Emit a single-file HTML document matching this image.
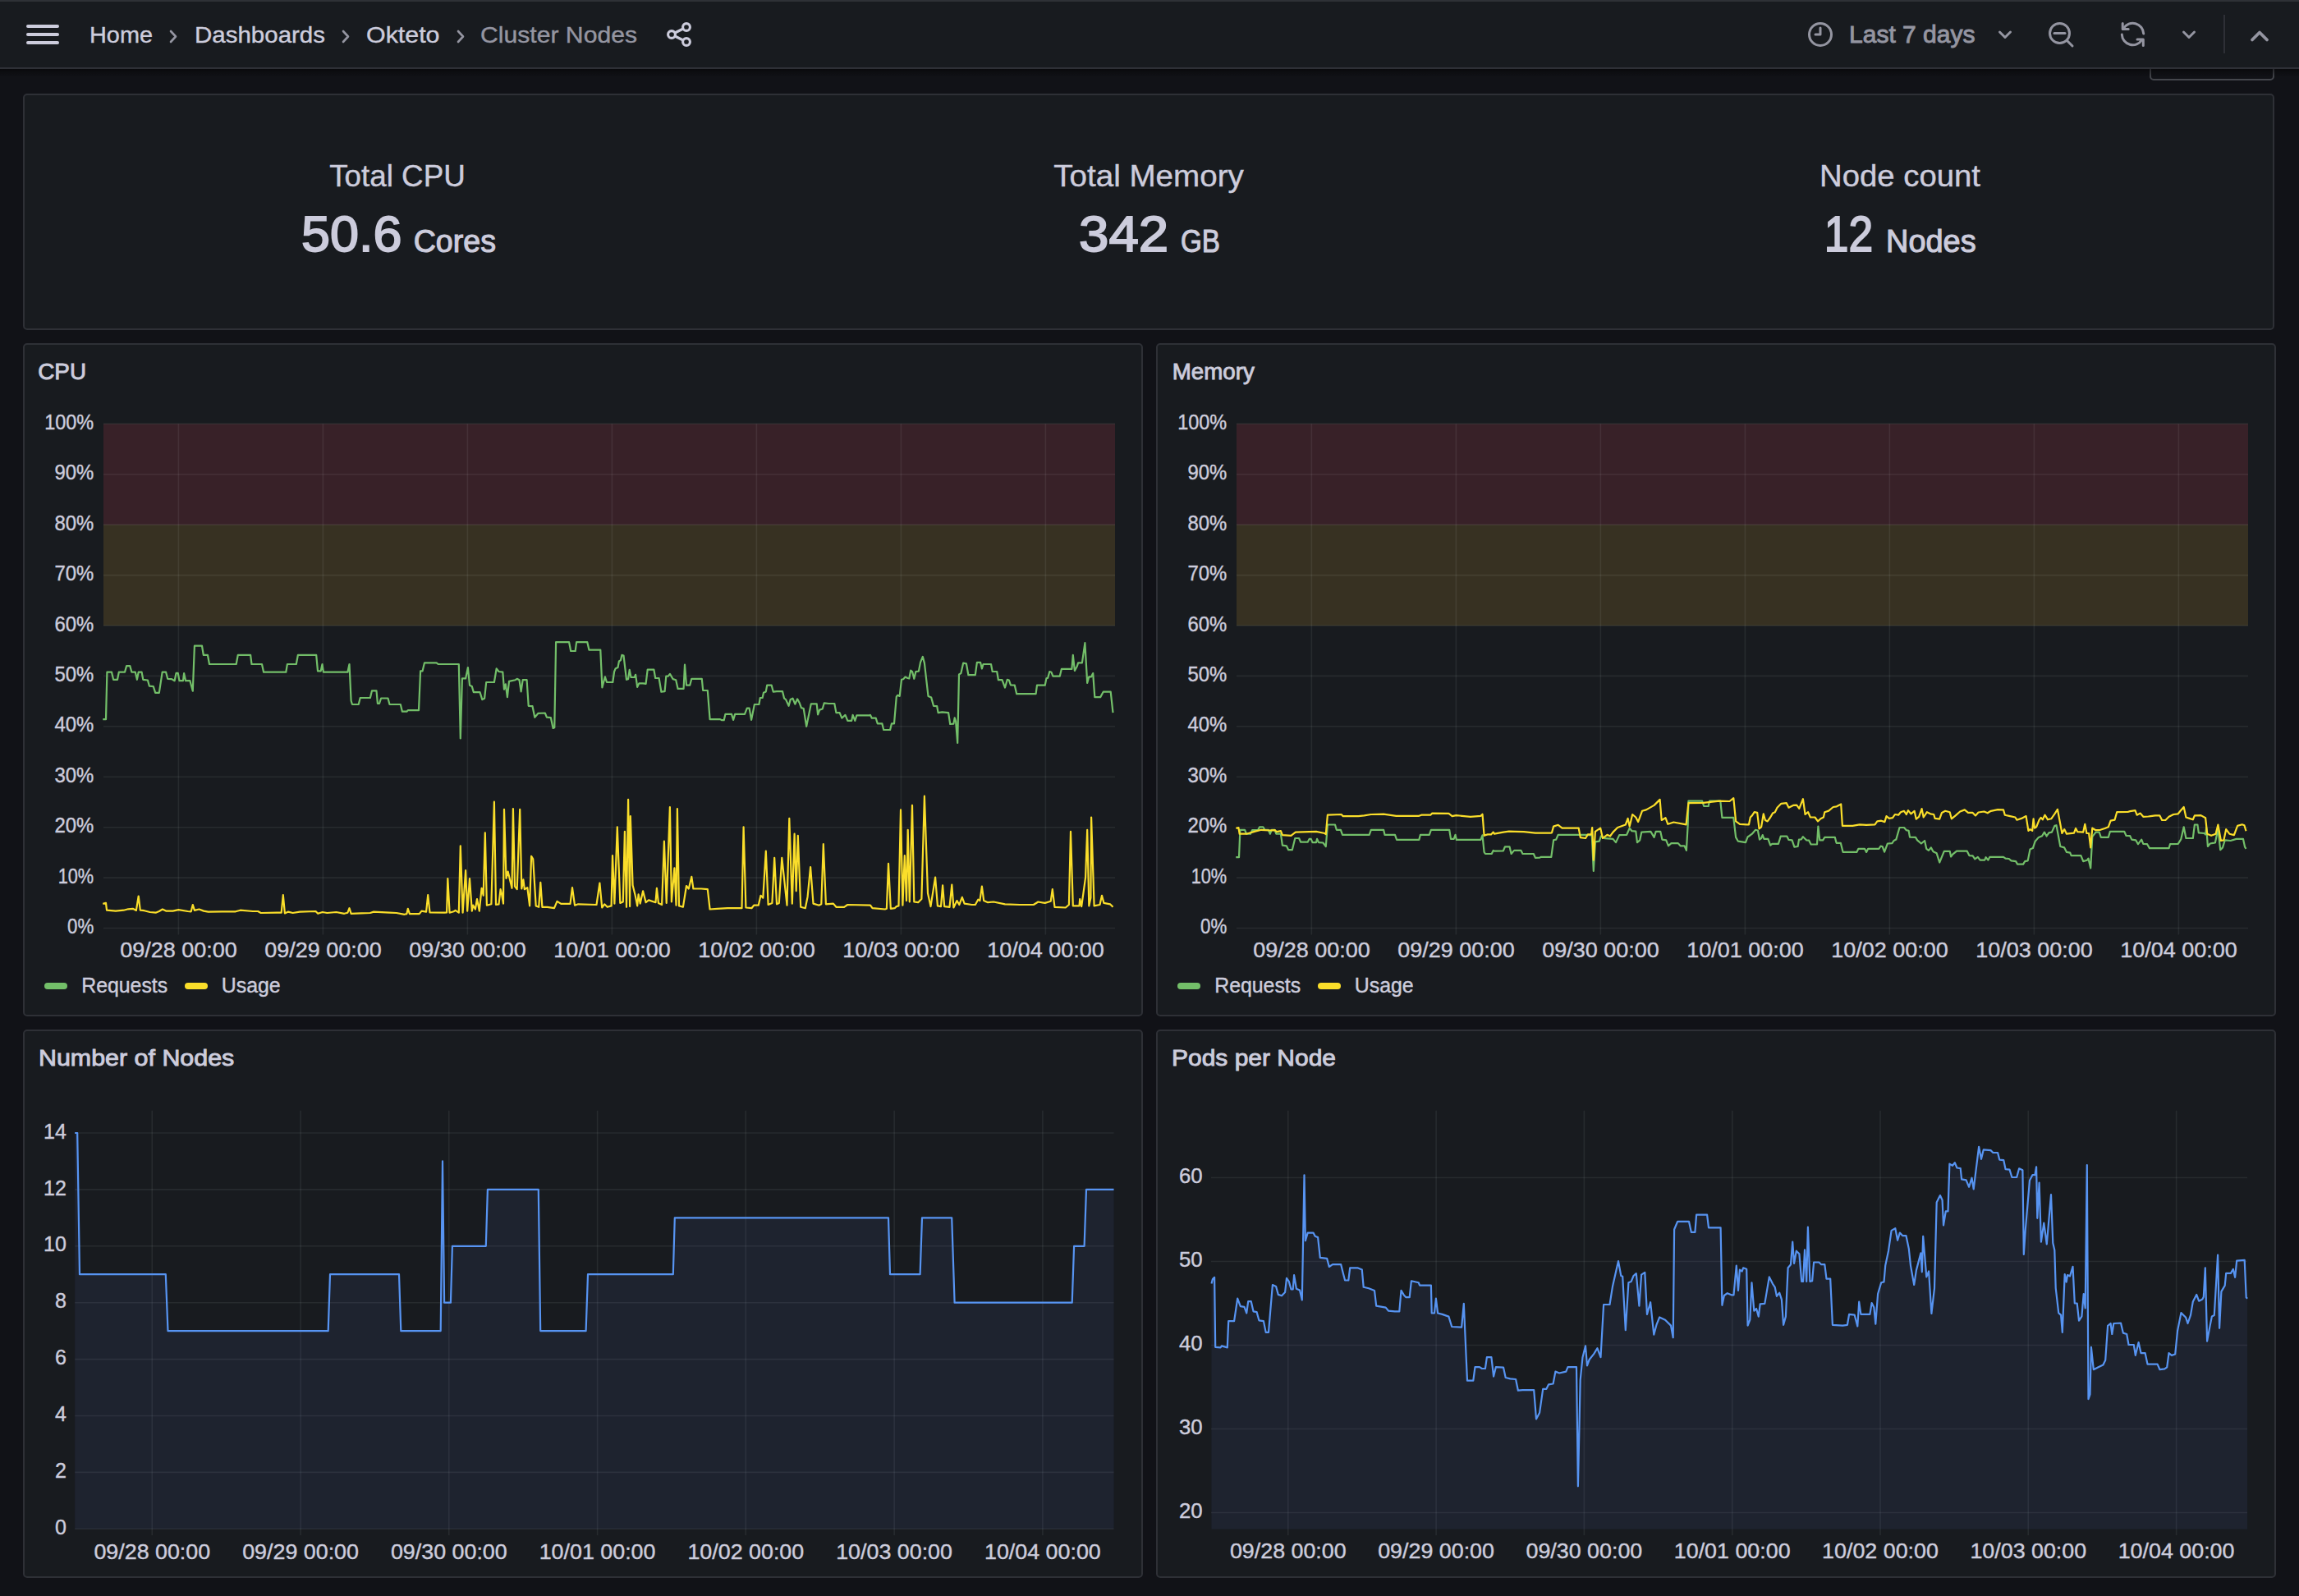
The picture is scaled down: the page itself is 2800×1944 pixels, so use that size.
<!DOCTYPE html>
<html><head><meta charset="utf-8"><title>Cluster Nodes - Dashboards - Grafana</title>
<style>html,body{margin:0;padding:0;background:#111217;width:2800px;height:1944px;overflow:hidden}
svg{display:block;font-family:"Liberation Sans", sans-serif}</style></head>
<body><svg width="2800" height="1944" viewBox="0 0 2800 1944">
<rect x="0" y="0" width="2800" height="1944" fill="#111217"/>
<rect x="2619" y="60" width="150" height="37" rx="4" fill="none" stroke="#44464c" stroke-width="2"/>
<rect x="0" y="0" width="2800" height="84" fill="#181b1f"/>
<rect x="0" y="0" width="2800" height="2" fill="#2e3136"/>
<rect x="0" y="82" width="2800" height="2" fill="#2e3036"/>
<defs><linearGradient id="hs" x1="0" y1="0" x2="0" y2="1"><stop offset="0" stop-color="#000" stop-opacity="0.45"/><stop offset="1" stop-color="#000" stop-opacity="0"/></linearGradient></defs>
<rect x="0" y="84" width="2800" height="10" fill="url(#hs)"/>
<line x1="34" y1="32" x2="70" y2="32" stroke="#ccccdc" stroke-width="4" stroke-linecap="round"/>
<line x1="34" y1="42" x2="70" y2="42" stroke="#ccccdc" stroke-width="4" stroke-linecap="round"/>
<line x1="34" y1="52" x2="70" y2="52" stroke="#ccccdc" stroke-width="4" stroke-linecap="round"/>
<text x="109" y="52" font-size="28.5" fill="#ccccdc" text-anchor="start" font-weight="400" textLength="77" lengthAdjust="spacingAndGlyphs" stroke="#ccccdc" stroke-width="0.4">Home</text>
<text x="237" y="52" font-size="28.5" fill="#ccccdc" text-anchor="start" font-weight="400" textLength="159" lengthAdjust="spacingAndGlyphs" stroke="#ccccdc" stroke-width="0.4">Dashboards</text>
<text x="446" y="52" font-size="28.5" fill="#ccccdc" text-anchor="start" font-weight="400" textLength="89.5" lengthAdjust="spacingAndGlyphs" stroke="#ccccdc" stroke-width="0.4">Okteto</text>
<text x="585" y="52" font-size="28.5" fill="#9495a1" text-anchor="start" font-weight="400" textLength="191" lengthAdjust="spacingAndGlyphs" stroke="#9495a1" stroke-width="0.4">Cluster Nodes</text>
<polyline points="208,38 214,44.5 208,51" fill="none" stroke="#9495a1" stroke-width="2.6" stroke-linecap="round" stroke-linejoin="round"/>
<polyline points="418,38 424,44.5 418,51" fill="none" stroke="#9495a1" stroke-width="2.6" stroke-linecap="round" stroke-linejoin="round"/>
<polyline points="558,38 564,44.5 558,51" fill="none" stroke="#9495a1" stroke-width="2.6" stroke-linecap="round" stroke-linejoin="round"/>
<g fill="none" stroke="#ccccdc" stroke-width="3.1"><circle cx="818" cy="42" r="4.4"/><circle cx="836" cy="33" r="4.4"/><circle cx="836" cy="51" r="4.4"/><line x1="822" y1="40" x2="832" y2="35"/><line x1="822" y1="44" x2="832" y2="49"/></g>
<g fill="none" stroke="#9495a1" stroke-width="3" stroke-linecap="round" stroke-linejoin="round"><circle cx="2217" cy="42" r="13.5"/><polyline points="2217,34 2217,42 2211,42"/><polyline points="2435.5,39 2442,45.5 2448.5,39"/><circle cx="2508.5" cy="40.5" r="12"/><line x1="2502" y1="40.5" x2="2515" y2="40.5"/><line x1="2518" y1="50" x2="2524" y2="56"/><path d="M2586.3,34.5 A13.2,13.2 0 0 1 2610.7,41.0"/><path d="M2584.3,42.0 A13.2,13.2 0 0 0 2608.7,48.5"/><polyline points="2585.2,28.5 2585.2,35.5 2592.2,35.5"/><polyline points="2603,48 2610.3,48 2610.3,55.5"/><polyline points="2659.5,39 2666,45.5 2672.5,39"/></g>
<polyline points="2743,48.5 2752,39.5 2761,48.5" fill="none" stroke="#9495a1" stroke-width="3.8" stroke-linecap="round" stroke-linejoin="round"/>
<text x="2252" y="51.8" font-size="29" fill="#9495a1" text-anchor="start" font-weight="400" textLength="153.5" lengthAdjust="spacingAndGlyphs" stroke="#9495a1" stroke-width="0.9">Last 7 days</text>
<rect x="2708" y="18" width="2" height="47" fill="#2e3036"/>
<rect x="29" y="115" width="2740" height="286" rx="4" ry="4" fill="#181b1f" stroke="#2e3036" stroke-width="2"/>
<text x="484" y="227" font-size="36.5" fill="#ccccdc" text-anchor="middle" font-weight="400" textLength="165.6" lengthAdjust="spacingAndGlyphs" stroke="#ccccdc" stroke-width="0.4">Total CPU</text>
<text x="367" y="306.3" font-size="61.5" fill="#ccccdc" text-anchor="start" font-weight="400" textLength="122.5" lengthAdjust="spacingAndGlyphs" stroke="#ccccdc" stroke-width="1.8">50.6</text>
<text x="503.7" y="306.9" font-size="38" fill="#ccccdc" text-anchor="start" font-weight="400" textLength="100.3" lengthAdjust="spacingAndGlyphs" stroke="#ccccdc" stroke-width="1.1">Cores</text>
<text x="1399" y="227" font-size="36.5" fill="#ccccdc" text-anchor="middle" font-weight="400" textLength="231.6" lengthAdjust="spacingAndGlyphs" stroke="#ccccdc" stroke-width="0.4">Total Memory</text>
<text x="1314" y="306.3" font-size="61.5" fill="#ccccdc" text-anchor="start" font-weight="400" textLength="109.2" lengthAdjust="spacingAndGlyphs" stroke="#ccccdc" stroke-width="1.8">342</text>
<text x="1438" y="306.9" font-size="38" fill="#ccccdc" text-anchor="start" font-weight="400" textLength="48" lengthAdjust="spacingAndGlyphs" stroke="#ccccdc" stroke-width="1.1">GB</text>
<text x="2314" y="227" font-size="36.5" fill="#ccccdc" text-anchor="middle" font-weight="400" textLength="195.8" lengthAdjust="spacingAndGlyphs" stroke="#ccccdc" stroke-width="0.4">Node count</text>
<text x="2221.8" y="306.3" font-size="61.5" fill="#ccccdc" text-anchor="start" font-weight="400" textLength="59.5" lengthAdjust="spacingAndGlyphs" stroke="#ccccdc" stroke-width="1.8">12</text>
<text x="2297" y="306.9" font-size="38" fill="#ccccdc" text-anchor="start" font-weight="400" textLength="109.6" lengthAdjust="spacingAndGlyphs" stroke="#ccccdc" stroke-width="1.1">Nodes</text>
<rect x="29" y="419" width="1362" height="818" rx="4" ry="4" fill="#181b1f" stroke="#2e3036" stroke-width="2"/>
<rect x="1409" y="419" width="1362" height="818" rx="4" ry="4" fill="#181b1f" stroke="#2e3036" stroke-width="2"/>
<rect x="29" y="1255" width="1362" height="666" rx="4" ry="4" fill="#181b1f" stroke="#2e3036" stroke-width="2"/>
<rect x="1409" y="1255" width="1362" height="666" rx="4" ry="4" fill="#181b1f" stroke="#2e3036" stroke-width="2"/>
<text x="46.3" y="462.4" font-size="28" fill="#ccccdc" text-anchor="start" font-weight="400" textLength="58.7" lengthAdjust="spacingAndGlyphs" stroke="#ccccdc" stroke-width="0.9">CPU</text>
<text x="1427.8" y="462.4" font-size="28" fill="#ccccdc" text-anchor="start" font-weight="400" textLength="100" lengthAdjust="spacingAndGlyphs" stroke="#ccccdc" stroke-width="0.9">Memory</text>
<text x="47" y="1298.4" font-size="28" fill="#ccccdc" text-anchor="start" font-weight="400" textLength="238.3" lengthAdjust="spacingAndGlyphs" stroke="#ccccdc" stroke-width="0.9">Number of Nodes</text>
<text x="1427" y="1298.4" font-size="28" fill="#ccccdc" text-anchor="start" font-weight="400" textLength="200" lengthAdjust="spacingAndGlyphs" stroke="#ccccdc" stroke-width="0.9">Pods per Node</text>
<rect x="126" y="516.3" width="1232" height="122.84" fill="rgba(242,73,92,0.15)"/>
<rect x="126" y="639.14" width="1232" height="122.84" fill="rgba(234,184,57,0.15)"/>
<line x1="126" y1="516.3" x2="1358" y2="516.3" stroke="rgba(240,250,255,0.07)" stroke-width="1.6"/>
<text x="114.2" y="522.9" font-size="25" fill="#ccccdc" text-anchor="end" font-weight="400" textLength="60" lengthAdjust="spacingAndGlyphs" stroke="#ccccdc" stroke-width="0.4">100%</text>
<line x1="126" y1="577.7" x2="1358" y2="577.7" stroke="rgba(240,250,255,0.07)" stroke-width="1.6"/>
<text x="114.2" y="584.3199999999999" font-size="25" fill="#ccccdc" text-anchor="end" font-weight="400" textLength="47.8" lengthAdjust="spacingAndGlyphs" stroke="#ccccdc" stroke-width="0.4">90%</text>
<line x1="126" y1="639.1" x2="1358" y2="639.1" stroke="rgba(240,250,255,0.07)" stroke-width="1.6"/>
<text x="114.2" y="645.74" font-size="25" fill="#ccccdc" text-anchor="end" font-weight="400" textLength="47.8" lengthAdjust="spacingAndGlyphs" stroke="#ccccdc" stroke-width="0.4">80%</text>
<line x1="126" y1="700.6" x2="1358" y2="700.6" stroke="rgba(240,250,255,0.07)" stroke-width="1.6"/>
<text x="114.2" y="707.16" font-size="25" fill="#ccccdc" text-anchor="end" font-weight="400" textLength="47.8" lengthAdjust="spacingAndGlyphs" stroke="#ccccdc" stroke-width="0.4">70%</text>
<line x1="126" y1="762.0" x2="1358" y2="762.0" stroke="rgba(240,250,255,0.07)" stroke-width="1.6"/>
<text x="114.2" y="768.58" font-size="25" fill="#ccccdc" text-anchor="end" font-weight="400" textLength="47.8" lengthAdjust="spacingAndGlyphs" stroke="#ccccdc" stroke-width="0.4">60%</text>
<line x1="126" y1="823.4" x2="1358" y2="823.4" stroke="rgba(240,250,255,0.07)" stroke-width="1.6"/>
<text x="114.2" y="830.0" font-size="25" fill="#ccccdc" text-anchor="end" font-weight="400" textLength="47.8" lengthAdjust="spacingAndGlyphs" stroke="#ccccdc" stroke-width="0.4">50%</text>
<line x1="126" y1="884.8" x2="1358" y2="884.8" stroke="rgba(240,250,255,0.07)" stroke-width="1.6"/>
<text x="114.2" y="891.42" font-size="25" fill="#ccccdc" text-anchor="end" font-weight="400" textLength="47.8" lengthAdjust="spacingAndGlyphs" stroke="#ccccdc" stroke-width="0.4">40%</text>
<line x1="126" y1="946.2" x2="1358" y2="946.2" stroke="rgba(240,250,255,0.07)" stroke-width="1.6"/>
<text x="114.2" y="952.84" font-size="25" fill="#ccccdc" text-anchor="end" font-weight="400" textLength="47.8" lengthAdjust="spacingAndGlyphs" stroke="#ccccdc" stroke-width="0.4">30%</text>
<line x1="126" y1="1007.7" x2="1358" y2="1007.7" stroke="rgba(240,250,255,0.07)" stroke-width="1.6"/>
<text x="114.2" y="1014.26" font-size="25" fill="#ccccdc" text-anchor="end" font-weight="400" textLength="47.8" lengthAdjust="spacingAndGlyphs" stroke="#ccccdc" stroke-width="0.4">20%</text>
<line x1="126" y1="1069.1" x2="1358" y2="1069.1" stroke="rgba(240,250,255,0.07)" stroke-width="1.6"/>
<text x="114.2" y="1075.6799999999998" font-size="25" fill="#ccccdc" text-anchor="end" font-weight="400" textLength="43.5" lengthAdjust="spacingAndGlyphs" stroke="#ccccdc" stroke-width="0.4">10%</text>
<line x1="126" y1="1130.5" x2="1358" y2="1130.5" stroke="rgba(240,250,255,0.07)" stroke-width="1.6"/>
<text x="114.2" y="1137.1" font-size="25" fill="#ccccdc" text-anchor="end" font-weight="400" textLength="32.2" lengthAdjust="spacingAndGlyphs" stroke="#ccccdc" stroke-width="0.4">0%</text>
<line x1="217.4" y1="516.3" x2="217.4" y2="1138.4" stroke="rgba(240,250,255,0.07)" stroke-width="1.6"/>
<text x="217.4" y="1166.3" font-size="25" fill="#ccccdc" text-anchor="middle" font-weight="400" textLength="142.5" lengthAdjust="spacingAndGlyphs" stroke="#ccccdc" stroke-width="0.4">09/28 00:00</text>
<line x1="393.4" y1="516.3" x2="393.4" y2="1138.4" stroke="rgba(240,250,255,0.07)" stroke-width="1.6"/>
<text x="393.4" y="1166.3" font-size="25" fill="#ccccdc" text-anchor="middle" font-weight="400" textLength="142.5" lengthAdjust="spacingAndGlyphs" stroke="#ccccdc" stroke-width="0.4">09/29 00:00</text>
<line x1="569.4" y1="516.3" x2="569.4" y2="1138.4" stroke="rgba(240,250,255,0.07)" stroke-width="1.6"/>
<text x="569.4" y="1166.3" font-size="25" fill="#ccccdc" text-anchor="middle" font-weight="400" textLength="142.5" lengthAdjust="spacingAndGlyphs" stroke="#ccccdc" stroke-width="0.4">09/30 00:00</text>
<line x1="745.4" y1="516.3" x2="745.4" y2="1138.4" stroke="rgba(240,250,255,0.07)" stroke-width="1.6"/>
<text x="745.4" y="1166.3" font-size="25" fill="#ccccdc" text-anchor="middle" font-weight="400" textLength="142.5" lengthAdjust="spacingAndGlyphs" stroke="#ccccdc" stroke-width="0.4">10/01 00:00</text>
<line x1="921.4" y1="516.3" x2="921.4" y2="1138.4" stroke="rgba(240,250,255,0.07)" stroke-width="1.6"/>
<text x="921.4" y="1166.3" font-size="25" fill="#ccccdc" text-anchor="middle" font-weight="400" textLength="142.5" lengthAdjust="spacingAndGlyphs" stroke="#ccccdc" stroke-width="0.4">10/02 00:00</text>
<line x1="1097.4" y1="516.3" x2="1097.4" y2="1138.4" stroke="rgba(240,250,255,0.07)" stroke-width="1.6"/>
<text x="1097.4" y="1166.3" font-size="25" fill="#ccccdc" text-anchor="middle" font-weight="400" textLength="142.5" lengthAdjust="spacingAndGlyphs" stroke="#ccccdc" stroke-width="0.4">10/03 00:00</text>
<line x1="1273.4" y1="516.3" x2="1273.4" y2="1138.4" stroke="rgba(240,250,255,0.07)" stroke-width="1.6"/>
<text x="1273.4" y="1166.3" font-size="25" fill="#ccccdc" text-anchor="middle" font-weight="400" textLength="142.5" lengthAdjust="spacingAndGlyphs" stroke="#ccccdc" stroke-width="0.4">10/04 00:00</text>
<line x1="58" y1="1201" x2="78" y2="1201" stroke="#73bf69" stroke-width="8" stroke-linecap="round"/>
<text x="99.2" y="1208.7" font-size="25" fill="#ccccdc" text-anchor="start" font-weight="400" textLength="105" lengthAdjust="spacingAndGlyphs" stroke="#ccccdc" stroke-width="0.4">Requests</text>
<line x1="229" y1="1201" x2="249" y2="1201" stroke="#fade2a" stroke-width="8" stroke-linecap="round"/>
<text x="269.7" y="1208.7" font-size="25" fill="#ccccdc" text-anchor="start" font-weight="400" textLength="72" lengthAdjust="spacingAndGlyphs" stroke="#ccccdc" stroke-width="0.4">Usage</text>
<rect x="1506" y="516.3" width="1232" height="122.84" fill="rgba(242,73,92,0.15)"/>
<rect x="1506" y="639.14" width="1232" height="122.84" fill="rgba(234,184,57,0.15)"/>
<line x1="1506" y1="516.3" x2="2738" y2="516.3" stroke="rgba(240,250,255,0.07)" stroke-width="1.6"/>
<text x="1494.2" y="522.9" font-size="25" fill="#ccccdc" text-anchor="end" font-weight="400" textLength="60" lengthAdjust="spacingAndGlyphs" stroke="#ccccdc" stroke-width="0.4">100%</text>
<line x1="1506" y1="577.7" x2="2738" y2="577.7" stroke="rgba(240,250,255,0.07)" stroke-width="1.6"/>
<text x="1494.2" y="584.3199999999999" font-size="25" fill="#ccccdc" text-anchor="end" font-weight="400" textLength="47.8" lengthAdjust="spacingAndGlyphs" stroke="#ccccdc" stroke-width="0.4">90%</text>
<line x1="1506" y1="639.1" x2="2738" y2="639.1" stroke="rgba(240,250,255,0.07)" stroke-width="1.6"/>
<text x="1494.2" y="645.74" font-size="25" fill="#ccccdc" text-anchor="end" font-weight="400" textLength="47.8" lengthAdjust="spacingAndGlyphs" stroke="#ccccdc" stroke-width="0.4">80%</text>
<line x1="1506" y1="700.6" x2="2738" y2="700.6" stroke="rgba(240,250,255,0.07)" stroke-width="1.6"/>
<text x="1494.2" y="707.16" font-size="25" fill="#ccccdc" text-anchor="end" font-weight="400" textLength="47.8" lengthAdjust="spacingAndGlyphs" stroke="#ccccdc" stroke-width="0.4">70%</text>
<line x1="1506" y1="762.0" x2="2738" y2="762.0" stroke="rgba(240,250,255,0.07)" stroke-width="1.6"/>
<text x="1494.2" y="768.58" font-size="25" fill="#ccccdc" text-anchor="end" font-weight="400" textLength="47.8" lengthAdjust="spacingAndGlyphs" stroke="#ccccdc" stroke-width="0.4">60%</text>
<line x1="1506" y1="823.4" x2="2738" y2="823.4" stroke="rgba(240,250,255,0.07)" stroke-width="1.6"/>
<text x="1494.2" y="830.0" font-size="25" fill="#ccccdc" text-anchor="end" font-weight="400" textLength="47.8" lengthAdjust="spacingAndGlyphs" stroke="#ccccdc" stroke-width="0.4">50%</text>
<line x1="1506" y1="884.8" x2="2738" y2="884.8" stroke="rgba(240,250,255,0.07)" stroke-width="1.6"/>
<text x="1494.2" y="891.42" font-size="25" fill="#ccccdc" text-anchor="end" font-weight="400" textLength="47.8" lengthAdjust="spacingAndGlyphs" stroke="#ccccdc" stroke-width="0.4">40%</text>
<line x1="1506" y1="946.2" x2="2738" y2="946.2" stroke="rgba(240,250,255,0.07)" stroke-width="1.6"/>
<text x="1494.2" y="952.84" font-size="25" fill="#ccccdc" text-anchor="end" font-weight="400" textLength="47.8" lengthAdjust="spacingAndGlyphs" stroke="#ccccdc" stroke-width="0.4">30%</text>
<line x1="1506" y1="1007.7" x2="2738" y2="1007.7" stroke="rgba(240,250,255,0.07)" stroke-width="1.6"/>
<text x="1494.2" y="1014.26" font-size="25" fill="#ccccdc" text-anchor="end" font-weight="400" textLength="47.8" lengthAdjust="spacingAndGlyphs" stroke="#ccccdc" stroke-width="0.4">20%</text>
<line x1="1506" y1="1069.1" x2="2738" y2="1069.1" stroke="rgba(240,250,255,0.07)" stroke-width="1.6"/>
<text x="1494.2" y="1075.6799999999998" font-size="25" fill="#ccccdc" text-anchor="end" font-weight="400" textLength="43.5" lengthAdjust="spacingAndGlyphs" stroke="#ccccdc" stroke-width="0.4">10%</text>
<line x1="1506" y1="1130.5" x2="2738" y2="1130.5" stroke="rgba(240,250,255,0.07)" stroke-width="1.6"/>
<text x="1494.2" y="1137.1" font-size="25" fill="#ccccdc" text-anchor="end" font-weight="400" textLength="32.2" lengthAdjust="spacingAndGlyphs" stroke="#ccccdc" stroke-width="0.4">0%</text>
<line x1="1597.4" y1="516.3" x2="1597.4" y2="1138.4" stroke="rgba(240,250,255,0.07)" stroke-width="1.6"/>
<text x="1597.4" y="1166.3" font-size="25" fill="#ccccdc" text-anchor="middle" font-weight="400" textLength="142.5" lengthAdjust="spacingAndGlyphs" stroke="#ccccdc" stroke-width="0.4">09/28 00:00</text>
<line x1="1773.4" y1="516.3" x2="1773.4" y2="1138.4" stroke="rgba(240,250,255,0.07)" stroke-width="1.6"/>
<text x="1773.4" y="1166.3" font-size="25" fill="#ccccdc" text-anchor="middle" font-weight="400" textLength="142.5" lengthAdjust="spacingAndGlyphs" stroke="#ccccdc" stroke-width="0.4">09/29 00:00</text>
<line x1="1949.4" y1="516.3" x2="1949.4" y2="1138.4" stroke="rgba(240,250,255,0.07)" stroke-width="1.6"/>
<text x="1949.4" y="1166.3" font-size="25" fill="#ccccdc" text-anchor="middle" font-weight="400" textLength="142.5" lengthAdjust="spacingAndGlyphs" stroke="#ccccdc" stroke-width="0.4">09/30 00:00</text>
<line x1="2125.4" y1="516.3" x2="2125.4" y2="1138.4" stroke="rgba(240,250,255,0.07)" stroke-width="1.6"/>
<text x="2125.4" y="1166.3" font-size="25" fill="#ccccdc" text-anchor="middle" font-weight="400" textLength="142.5" lengthAdjust="spacingAndGlyphs" stroke="#ccccdc" stroke-width="0.4">10/01 00:00</text>
<line x1="2301.4" y1="516.3" x2="2301.4" y2="1138.4" stroke="rgba(240,250,255,0.07)" stroke-width="1.6"/>
<text x="2301.4" y="1166.3" font-size="25" fill="#ccccdc" text-anchor="middle" font-weight="400" textLength="142.5" lengthAdjust="spacingAndGlyphs" stroke="#ccccdc" stroke-width="0.4">10/02 00:00</text>
<line x1="2477.4" y1="516.3" x2="2477.4" y2="1138.4" stroke="rgba(240,250,255,0.07)" stroke-width="1.6"/>
<text x="2477.4" y="1166.3" font-size="25" fill="#ccccdc" text-anchor="middle" font-weight="400" textLength="142.5" lengthAdjust="spacingAndGlyphs" stroke="#ccccdc" stroke-width="0.4">10/03 00:00</text>
<line x1="2653.4" y1="516.3" x2="2653.4" y2="1138.4" stroke="rgba(240,250,255,0.07)" stroke-width="1.6"/>
<text x="2653.4" y="1166.3" font-size="25" fill="#ccccdc" text-anchor="middle" font-weight="400" textLength="142.5" lengthAdjust="spacingAndGlyphs" stroke="#ccccdc" stroke-width="0.4">10/04 00:00</text>
<line x1="1438" y1="1201" x2="1458" y2="1201" stroke="#73bf69" stroke-width="8" stroke-linecap="round"/>
<text x="1479.2" y="1208.7" font-size="25" fill="#ccccdc" text-anchor="start" font-weight="400" textLength="105" lengthAdjust="spacingAndGlyphs" stroke="#ccccdc" stroke-width="0.4">Requests</text>
<line x1="1609" y1="1201" x2="1629" y2="1201" stroke="#fade2a" stroke-width="8" stroke-linecap="round"/>
<text x="1649.7" y="1208.7" font-size="25" fill="#ccccdc" text-anchor="start" font-weight="400" textLength="72" lengthAdjust="spacingAndGlyphs" stroke="#ccccdc" stroke-width="0.4">Usage</text>
<line x1="185.3" y1="1352.7" x2="185.3" y2="1870" stroke="rgba(240,250,255,0.07)" stroke-width="1.6"/>
<text x="185.3" y="1898.5" font-size="25" fill="#ccccdc" text-anchor="middle" font-weight="400" textLength="141.8" lengthAdjust="spacingAndGlyphs" stroke="#ccccdc" stroke-width="0.4">09/28 00:00</text>
<line x1="366.1" y1="1352.7" x2="366.1" y2="1870" stroke="rgba(240,250,255,0.07)" stroke-width="1.6"/>
<text x="366.06" y="1898.5" font-size="25" fill="#ccccdc" text-anchor="middle" font-weight="400" textLength="141.8" lengthAdjust="spacingAndGlyphs" stroke="#ccccdc" stroke-width="0.4">09/29 00:00</text>
<line x1="546.8" y1="1352.7" x2="546.8" y2="1870" stroke="rgba(240,250,255,0.07)" stroke-width="1.6"/>
<text x="546.8199999999999" y="1898.5" font-size="25" fill="#ccccdc" text-anchor="middle" font-weight="400" textLength="141.8" lengthAdjust="spacingAndGlyphs" stroke="#ccccdc" stroke-width="0.4">09/30 00:00</text>
<line x1="727.6" y1="1352.7" x2="727.6" y2="1870" stroke="rgba(240,250,255,0.07)" stroke-width="1.6"/>
<text x="727.5799999999999" y="1898.5" font-size="25" fill="#ccccdc" text-anchor="middle" font-weight="400" textLength="141.8" lengthAdjust="spacingAndGlyphs" stroke="#ccccdc" stroke-width="0.4">10/01 00:00</text>
<line x1="908.3" y1="1352.7" x2="908.3" y2="1870" stroke="rgba(240,250,255,0.07)" stroke-width="1.6"/>
<text x="908.3399999999999" y="1898.5" font-size="25" fill="#ccccdc" text-anchor="middle" font-weight="400" textLength="141.8" lengthAdjust="spacingAndGlyphs" stroke="#ccccdc" stroke-width="0.4">10/02 00:00</text>
<line x1="1089.1" y1="1352.7" x2="1089.1" y2="1870" stroke="rgba(240,250,255,0.07)" stroke-width="1.6"/>
<text x="1089.1" y="1898.5" font-size="25" fill="#ccccdc" text-anchor="middle" font-weight="400" textLength="141.8" lengthAdjust="spacingAndGlyphs" stroke="#ccccdc" stroke-width="0.4">10/03 00:00</text>
<line x1="1269.9" y1="1352.7" x2="1269.9" y2="1870" stroke="rgba(240,250,255,0.07)" stroke-width="1.6"/>
<text x="1269.86" y="1898.5" font-size="25" fill="#ccccdc" text-anchor="middle" font-weight="400" textLength="141.8" lengthAdjust="spacingAndGlyphs" stroke="#ccccdc" stroke-width="0.4">10/04 00:00</text>
<line x1="91.2" y1="1862.3" x2="1356.5" y2="1862.3" stroke="rgba(240,250,255,0.07)" stroke-width="1.6"/>
<text x="80.9" y="1868.8999999999999" font-size="25" fill="#ccccdc" text-anchor="end" font-weight="400" stroke="#ccccdc" stroke-width="0.4">0</text>
<line x1="91.2" y1="1793.4" x2="1356.5" y2="1793.4" stroke="rgba(240,250,255,0.07)" stroke-width="1.6"/>
<text x="80.9" y="1799.9999999999998" font-size="25" fill="#ccccdc" text-anchor="end" font-weight="400" stroke="#ccccdc" stroke-width="0.4">2</text>
<line x1="91.2" y1="1724.5" x2="1356.5" y2="1724.5" stroke="rgba(240,250,255,0.07)" stroke-width="1.6"/>
<text x="80.9" y="1731.1" font-size="25" fill="#ccccdc" text-anchor="end" font-weight="400" stroke="#ccccdc" stroke-width="0.4">4</text>
<line x1="91.2" y1="1655.6" x2="1356.5" y2="1655.6" stroke="rgba(240,250,255,0.07)" stroke-width="1.6"/>
<text x="80.9" y="1662.1999999999998" font-size="25" fill="#ccccdc" text-anchor="end" font-weight="400" stroke="#ccccdc" stroke-width="0.4">6</text>
<line x1="91.2" y1="1586.7" x2="1356.5" y2="1586.7" stroke="rgba(240,250,255,0.07)" stroke-width="1.6"/>
<text x="80.9" y="1593.2999999999997" font-size="25" fill="#ccccdc" text-anchor="end" font-weight="400" stroke="#ccccdc" stroke-width="0.4">8</text>
<line x1="91.2" y1="1517.8" x2="1356.5" y2="1517.8" stroke="rgba(240,250,255,0.07)" stroke-width="1.6"/>
<text x="80.9" y="1524.3999999999999" font-size="25" fill="#ccccdc" text-anchor="end" font-weight="400" stroke="#ccccdc" stroke-width="0.4">10</text>
<line x1="91.2" y1="1448.9" x2="1356.5" y2="1448.9" stroke="rgba(240,250,255,0.07)" stroke-width="1.6"/>
<text x="80.9" y="1455.4999999999998" font-size="25" fill="#ccccdc" text-anchor="end" font-weight="400" stroke="#ccccdc" stroke-width="0.4">12</text>
<line x1="91.2" y1="1380.0" x2="1356.5" y2="1380.0" stroke="rgba(240,250,255,0.07)" stroke-width="1.6"/>
<text x="80.9" y="1386.6" font-size="25" fill="#ccccdc" text-anchor="end" font-weight="400" stroke="#ccccdc" stroke-width="0.4">14</text>
<line x1="1568.8" y1="1352.7" x2="1568.8" y2="1870" stroke="rgba(240,250,255,0.07)" stroke-width="1.6"/>
<text x="1568.8" y="1898.3" font-size="25" fill="#ccccdc" text-anchor="middle" font-weight="400" textLength="141.8" lengthAdjust="spacingAndGlyphs" stroke="#ccccdc" stroke-width="0.4">09/28 00:00</text>
<line x1="1749.1" y1="1352.7" x2="1749.1" y2="1870" stroke="rgba(240,250,255,0.07)" stroke-width="1.6"/>
<text x="1749.1" y="1898.3" font-size="25" fill="#ccccdc" text-anchor="middle" font-weight="400" textLength="141.8" lengthAdjust="spacingAndGlyphs" stroke="#ccccdc" stroke-width="0.4">09/29 00:00</text>
<line x1="1929.4" y1="1352.7" x2="1929.4" y2="1870" stroke="rgba(240,250,255,0.07)" stroke-width="1.6"/>
<text x="1929.4" y="1898.3" font-size="25" fill="#ccccdc" text-anchor="middle" font-weight="400" textLength="141.8" lengthAdjust="spacingAndGlyphs" stroke="#ccccdc" stroke-width="0.4">09/30 00:00</text>
<line x1="2109.7" y1="1352.7" x2="2109.7" y2="1870" stroke="rgba(240,250,255,0.07)" stroke-width="1.6"/>
<text x="2109.7" y="1898.3" font-size="25" fill="#ccccdc" text-anchor="middle" font-weight="400" textLength="141.8" lengthAdjust="spacingAndGlyphs" stroke="#ccccdc" stroke-width="0.4">10/01 00:00</text>
<line x1="2290.0" y1="1352.7" x2="2290.0" y2="1870" stroke="rgba(240,250,255,0.07)" stroke-width="1.6"/>
<text x="2290.0" y="1898.3" font-size="25" fill="#ccccdc" text-anchor="middle" font-weight="400" textLength="141.8" lengthAdjust="spacingAndGlyphs" stroke="#ccccdc" stroke-width="0.4">10/02 00:00</text>
<line x1="2470.3" y1="1352.7" x2="2470.3" y2="1870" stroke="rgba(240,250,255,0.07)" stroke-width="1.6"/>
<text x="2470.3" y="1898.3" font-size="25" fill="#ccccdc" text-anchor="middle" font-weight="400" textLength="141.8" lengthAdjust="spacingAndGlyphs" stroke="#ccccdc" stroke-width="0.4">10/03 00:00</text>
<line x1="2650.6" y1="1352.7" x2="2650.6" y2="1870" stroke="rgba(240,250,255,0.07)" stroke-width="1.6"/>
<text x="2650.6000000000004" y="1898.3" font-size="25" fill="#ccccdc" text-anchor="middle" font-weight="400" textLength="141.8" lengthAdjust="spacingAndGlyphs" stroke="#ccccdc" stroke-width="0.4">10/04 00:00</text>
<line x1="1475" y1="1842.5" x2="2737" y2="1842.5" stroke="rgba(240,250,255,0.07)" stroke-width="1.6"/>
<text x="1464.7" y="1849.1" font-size="25" fill="#ccccdc" text-anchor="end" font-weight="400" textLength="28.7" lengthAdjust="spacingAndGlyphs" stroke="#ccccdc" stroke-width="0.4">20</text>
<line x1="1475" y1="1740.5" x2="2737" y2="1740.5" stroke="rgba(240,250,255,0.07)" stroke-width="1.6"/>
<text x="1464.7" y="1747.1" font-size="25" fill="#ccccdc" text-anchor="end" font-weight="400" textLength="28.7" lengthAdjust="spacingAndGlyphs" stroke="#ccccdc" stroke-width="0.4">30</text>
<line x1="1475" y1="1638.5" x2="2737" y2="1638.5" stroke="rgba(240,250,255,0.07)" stroke-width="1.6"/>
<text x="1464.7" y="1645.1" font-size="25" fill="#ccccdc" text-anchor="end" font-weight="400" textLength="28.7" lengthAdjust="spacingAndGlyphs" stroke="#ccccdc" stroke-width="0.4">40</text>
<line x1="1475" y1="1536.5" x2="2737" y2="1536.5" stroke="rgba(240,250,255,0.07)" stroke-width="1.6"/>
<text x="1464.7" y="1543.1" font-size="25" fill="#ccccdc" text-anchor="end" font-weight="400" textLength="28.7" lengthAdjust="spacingAndGlyphs" stroke="#ccccdc" stroke-width="0.4">50</text>
<line x1="1475" y1="1434.5" x2="2737" y2="1434.5" stroke="rgba(240,250,255,0.07)" stroke-width="1.6"/>
<text x="1464.7" y="1441.1" font-size="25" fill="#ccccdc" text-anchor="end" font-weight="400" textLength="28.7" lengthAdjust="spacingAndGlyphs" stroke="#ccccdc" stroke-width="0.4">60</text>
<polygon points="91.2,1862.3 91.2,1380.0 94.2,1380.0 97.0,1552.2 201.8,1552.2 204.5,1621.1 399.7,1621.1 402.0,1552.2 486.0,1552.2 488.3,1621.1 536.7,1621.1 539.0,1414.4 541.1,1586.7 548.9,1586.7 550.9,1517.8 591.8,1517.8 593.9,1448.9 655.8,1448.9 658.2,1621.1 713.6,1621.1 716.0,1552.2 819.8,1552.2 821.8,1483.3 1082.0,1483.3 1084.0,1552.2 1120.6,1552.2 1123.0,1483.3 1159.2,1483.3 1162.6,1586.7 1305.7,1586.7 1308.1,1517.8 1320.6,1517.8 1323.0,1448.9 1356.5,1448.9 1356.5,1862.3" fill="rgba(84,107,201,0.1)"/>
<polyline points="91.2,1380.0 94.2,1380.0 97.0,1552.2 201.8,1552.2 204.5,1621.1 399.7,1621.1 402.0,1552.2 486.0,1552.2 488.3,1621.1 536.7,1621.1 539.0,1414.4 541.1,1586.7 548.9,1586.7 550.9,1517.8 591.8,1517.8 593.9,1448.9 655.8,1448.9 658.2,1621.1 713.6,1621.1 716.0,1552.2 819.8,1552.2 821.8,1483.3 1082.0,1483.3 1084.0,1552.2 1120.6,1552.2 1123.0,1483.3 1159.2,1483.3 1162.6,1586.7 1305.7,1586.7 1308.1,1517.8 1320.6,1517.8 1323.0,1448.9 1356.5,1448.9" fill="none" stroke="#5794f2" stroke-width="2.2" stroke-linejoin="round"/>
<polygon points="1475.5,1862.5 1475.5,1563.6 1476.9,1558.1 1479.1,1555.9 1480.2,1640.8 1486.5,1641.4 1487.9,1639.4 1494.8,1641.4 1496.2,1609.1 1503.1,1609.1 1507.2,1581.6 1510.8,1591.2 1515.5,1591.8 1518.2,1599.5 1520.2,1585.1 1523.7,1585.1 1526.5,1597.3 1530.6,1598.1 1533.4,1608.3 1538.9,1609.1 1541.7,1622.9 1545.0,1622.9 1549.9,1565.0 1554.1,1567.0 1556.8,1576.9 1561.0,1578.3 1565.1,1574.1 1567.0,1556.8 1569.8,1560.9 1572.5,1570.5 1574.7,1570.5 1576.1,1553.2 1578.9,1569.7 1583.0,1571.4 1585.8,1583.5 1588.5,1431.3 1589.9,1511.3 1592.7,1501.6 1599.5,1501.6 1601.7,1505.8 1605.1,1507.1 1607.8,1531.9 1616.1,1532.8 1618.8,1543.0 1623.0,1540.2 1633.2,1540.2 1635.4,1549.3 1638.1,1559.5 1642.3,1559.5 1644.2,1544.3 1653.3,1544.3 1658.8,1546.6 1660.7,1567.8 1667.1,1569.2 1674.0,1571.9 1676.2,1590.7 1687.7,1592.6 1691.1,1596.7 1698.8,1597.3 1704.3,1597.3 1706.5,1571.9 1709.8,1577.4 1712.5,1580.2 1716.7,1580.2 1718.9,1560.3 1727.7,1562.3 1729.1,1565.6 1742.9,1565.6 1743.7,1599.5 1747.0,1599.5 1748.9,1581.6 1751.1,1599.5 1756.6,1600.9 1764.4,1603.6 1768.2,1616.0 1780.1,1616.6 1782.8,1587.9 1785.6,1651.8 1787.0,1681.6 1789.9,1681.6 1794.3,1681.6 1796.5,1665.1 1802.0,1665.1 1804.8,1667.0 1808.9,1667.0 1810.9,1653.2 1816.4,1653.2 1819.1,1676.6 1821.9,1665.1 1831.0,1665.6 1833.7,1678.0 1839.3,1679.4 1846.1,1680.0 1848.9,1693.7 1854.4,1693.2 1868.2,1693.2 1871.0,1728.5 1875.1,1720.7 1879.2,1691.8 1883.4,1691.8 1886.1,1686.3 1891.6,1685.5 1894.4,1670.6 1899.1,1672.5 1907.3,1670.6 1909.5,1665.1 1920.0,1665.1 1921.9,1810.3 1924.7,1680.8 1927.5,1653.2 1931.0,1639.4 1933.0,1663.4 1935.7,1656.0 1941.2,1649.1 1945.4,1642.2 1949.5,1653.2 1953.1,1589.0 1960.5,1589.0 1964.1,1566.4 1971.0,1536.1 1974.3,1554.0 1976.2,1554.8 1979.8,1620.1 1983.4,1562.3 1986.7,1560.9 1989.5,1554.0 1992.8,1551.2 1996.4,1590.7 1999.1,1552.6 2003.3,1549.9 2006.0,1600.9 2010.1,1586.2 2014.3,1625.7 2017.6,1613.3 2021.2,1604.4 2028.1,1607.7 2035.0,1614.6 2037.7,1629.2 2039.1,1497.5 2043.2,1487.8 2057.0,1487.8 2059.8,1500.8 2064.4,1500.8 2066.1,1479.6 2079.1,1479.6 2081.0,1495.3 2095.6,1495.3 2097.4,1589.8 2099.9,1578.0 2103.8,1575.2 2109.3,1577.4 2111.5,1577.4 2114.8,1541.6 2117.0,1571.9 2118.9,1546.6 2121.7,1548.5 2123.1,1544.3 2127.2,1545.7 2128.6,1614.6 2131.3,1607.7 2133.5,1562.3 2136.3,1596.7 2139.1,1594.0 2141.8,1603.6 2143.7,1588.4 2149.3,1587.9 2154.8,1555.4 2158.9,1563.6 2161.7,1567.8 2163.9,1578.8 2167.2,1574.7 2169.9,1582.9 2172.1,1613.8 2174.9,1603.6 2177.6,1544.3 2181.0,1540.2 2183.2,1512.7 2185.1,1538.8 2187.8,1523.7 2191.4,1527.3 2194.2,1560.9 2196.1,1560.9 2198.0,1522.3 2200.2,1560.9 2201.9,1494.7 2204.4,1560.9 2207.1,1560.3 2209.1,1537.5 2215.4,1537.5 2218.2,1540.2 2222.3,1540.2 2224.5,1557.6 2229.2,1557.6 2231.9,1613.8 2244.3,1614.6 2249.9,1613.8 2252.1,1600.9 2258.7,1601.7 2262.3,1615.5 2264.2,1585.7 2266.4,1600.9 2277.4,1600.9 2279.6,1587.1 2282.4,1592.6 2284.3,1612.7 2287.1,1576.0 2291.2,1562.3 2294.5,1561.4 2296.2,1541.6 2300.0,1523.7 2303.6,1498.9 2308.3,1496.1 2311.1,1510.7 2313.8,1501.6 2317.4,1505.2 2321.5,1505.2 2324.8,1520.9 2327.0,1541.6 2331.2,1565.0 2333.9,1547.1 2339.4,1526.4 2340.8,1549.3 2342.2,1505.8 2346.3,1555.4 2349.1,1548.5 2352.4,1600.0 2356.0,1569.2 2358.7,1464.4 2362.9,1456.1 2365.6,1461.7 2367.0,1492.5 2369.8,1475.4 2372.5,1475.4 2374.4,1417.6 2378.0,1419.8 2380.8,1416.2 2383.5,1422.5 2387.7,1423.1 2389.1,1436.3 2394.6,1437.4 2398.1,1445.7 2401.5,1434.7 2403.7,1448.4 2410.1,1396.8 2413.0,1411.8 2415.8,1400.3 2424.5,1401.1 2427.4,1404.0 2433.1,1404.0 2435.2,1412.6 2440.3,1413.2 2442.6,1424.2 2447.5,1424.7 2450.4,1434.0 2456.2,1434.0 2459.1,1423.3 2463.4,1425.3 2464.8,1527.9 2466.8,1498.2 2472.0,1437.7 2475.5,1431.1 2478.4,1431.1 2480.1,1421.3 2481.3,1483.8 2483.6,1440.6 2485.9,1512.6 2489.3,1489.6 2492.8,1515.5 2498.0,1455.0 2500.3,1514.1 2502.3,1522.7 2503.7,1568.8 2507.2,1599.1 2510.1,1601.9 2511.8,1623.0 2514.7,1552.1 2516.7,1561.6 2518.1,1553.0 2521.0,1554.4 2524.5,1542.9 2526.8,1587.5 2529.7,1587.5 2532.0,1608.6 2535.4,1603.4 2537.7,1576.0 2539.7,1593.3 2541.8,1419.0 2543.5,1704.2 2545.5,1698.5 2546.9,1640.8 2549.8,1668.2 2555.6,1665.3 2561.4,1662.5 2564.2,1656.7 2567.1,1614.9 2570.6,1612.0 2572.3,1625.0 2574.3,1612.0 2583.0,1611.5 2585.8,1623.6 2590.2,1625.0 2592.5,1638.0 2598.8,1638.0 2600.8,1650.9 2604.6,1635.1 2607.5,1648.1 2612.6,1648.1 2615.5,1661.6 2627.6,1661.6 2630.5,1668.2 2636.3,1667.4 2639.2,1665.3 2641.5,1648.1 2644.9,1650.9 2649.2,1649.5 2652.1,1620.7 2656.4,1599.1 2662.2,1604.8 2664.5,1612.0 2668.0,1601.9 2670.8,1585.5 2675.2,1576.9 2678.1,1584.7 2682.4,1582.6 2683.8,1579.8 2685.8,1544.3 2688.1,1633.6 2691.6,1614.9 2693.9,1603.4 2696.8,1601.9 2701.1,1528.5 2703.1,1617.8 2705.4,1573.1 2709.7,1565.9 2711.2,1550.9 2716.9,1550.9 2719.8,1545.8 2722.1,1555.8 2724.2,1535.7 2733.7,1534.8 2735.7,1580.3 2737.1,1581.8 2737.1,1862.5" fill="rgba(84,107,201,0.1)"/>
<polyline points="1475.5,1563.6 1476.9,1558.1 1479.1,1555.9 1480.2,1640.8 1486.5,1641.4 1487.9,1639.4 1494.8,1641.4 1496.2,1609.1 1503.1,1609.1 1507.2,1581.6 1510.8,1591.2 1515.5,1591.8 1518.2,1599.5 1520.2,1585.1 1523.7,1585.1 1526.5,1597.3 1530.6,1598.1 1533.4,1608.3 1538.9,1609.1 1541.7,1622.9 1545.0,1622.9 1549.9,1565.0 1554.1,1567.0 1556.8,1576.9 1561.0,1578.3 1565.1,1574.1 1567.0,1556.8 1569.8,1560.9 1572.5,1570.5 1574.7,1570.5 1576.1,1553.2 1578.9,1569.7 1583.0,1571.4 1585.8,1583.5 1588.5,1431.3 1589.9,1511.3 1592.7,1501.6 1599.5,1501.6 1601.7,1505.8 1605.1,1507.1 1607.8,1531.9 1616.1,1532.8 1618.8,1543.0 1623.0,1540.2 1633.2,1540.2 1635.4,1549.3 1638.1,1559.5 1642.3,1559.5 1644.2,1544.3 1653.3,1544.3 1658.8,1546.6 1660.7,1567.8 1667.1,1569.2 1674.0,1571.9 1676.2,1590.7 1687.7,1592.6 1691.1,1596.7 1698.8,1597.3 1704.3,1597.3 1706.5,1571.9 1709.8,1577.4 1712.5,1580.2 1716.7,1580.2 1718.9,1560.3 1727.7,1562.3 1729.1,1565.6 1742.9,1565.6 1743.7,1599.5 1747.0,1599.5 1748.9,1581.6 1751.1,1599.5 1756.6,1600.9 1764.4,1603.6 1768.2,1616.0 1780.1,1616.6 1782.8,1587.9 1785.6,1651.8 1787.0,1681.6 1789.9,1681.6 1794.3,1681.6 1796.5,1665.1 1802.0,1665.1 1804.8,1667.0 1808.9,1667.0 1810.9,1653.2 1816.4,1653.2 1819.1,1676.6 1821.9,1665.1 1831.0,1665.6 1833.7,1678.0 1839.3,1679.4 1846.1,1680.0 1848.9,1693.7 1854.4,1693.2 1868.2,1693.2 1871.0,1728.5 1875.1,1720.7 1879.2,1691.8 1883.4,1691.8 1886.1,1686.3 1891.6,1685.5 1894.4,1670.6 1899.1,1672.5 1907.3,1670.6 1909.5,1665.1 1920.0,1665.1 1921.9,1810.3 1924.7,1680.8 1927.5,1653.2 1931.0,1639.4 1933.0,1663.4 1935.7,1656.0 1941.2,1649.1 1945.4,1642.2 1949.5,1653.2 1953.1,1589.0 1960.5,1589.0 1964.1,1566.4 1971.0,1536.1 1974.3,1554.0 1976.2,1554.8 1979.8,1620.1 1983.4,1562.3 1986.7,1560.9 1989.5,1554.0 1992.8,1551.2 1996.4,1590.7 1999.1,1552.6 2003.3,1549.9 2006.0,1600.9 2010.1,1586.2 2014.3,1625.7 2017.6,1613.3 2021.2,1604.4 2028.1,1607.7 2035.0,1614.6 2037.7,1629.2 2039.1,1497.5 2043.2,1487.8 2057.0,1487.8 2059.8,1500.8 2064.4,1500.8 2066.1,1479.6 2079.1,1479.6 2081.0,1495.3 2095.6,1495.3 2097.4,1589.8 2099.9,1578.0 2103.8,1575.2 2109.3,1577.4 2111.5,1577.4 2114.8,1541.6 2117.0,1571.9 2118.9,1546.6 2121.7,1548.5 2123.1,1544.3 2127.2,1545.7 2128.6,1614.6 2131.3,1607.7 2133.5,1562.3 2136.3,1596.7 2139.1,1594.0 2141.8,1603.6 2143.7,1588.4 2149.3,1587.9 2154.8,1555.4 2158.9,1563.6 2161.7,1567.8 2163.9,1578.8 2167.2,1574.7 2169.9,1582.9 2172.1,1613.8 2174.9,1603.6 2177.6,1544.3 2181.0,1540.2 2183.2,1512.7 2185.1,1538.8 2187.8,1523.7 2191.4,1527.3 2194.2,1560.9 2196.1,1560.9 2198.0,1522.3 2200.2,1560.9 2201.9,1494.7 2204.4,1560.9 2207.1,1560.3 2209.1,1537.5 2215.4,1537.5 2218.2,1540.2 2222.3,1540.2 2224.5,1557.6 2229.2,1557.6 2231.9,1613.8 2244.3,1614.6 2249.9,1613.8 2252.1,1600.9 2258.7,1601.7 2262.3,1615.5 2264.2,1585.7 2266.4,1600.9 2277.4,1600.9 2279.6,1587.1 2282.4,1592.6 2284.3,1612.7 2287.1,1576.0 2291.2,1562.3 2294.5,1561.4 2296.2,1541.6 2300.0,1523.7 2303.6,1498.9 2308.3,1496.1 2311.1,1510.7 2313.8,1501.6 2317.4,1505.2 2321.5,1505.2 2324.8,1520.9 2327.0,1541.6 2331.2,1565.0 2333.9,1547.1 2339.4,1526.4 2340.8,1549.3 2342.2,1505.8 2346.3,1555.4 2349.1,1548.5 2352.4,1600.0 2356.0,1569.2 2358.7,1464.4 2362.9,1456.1 2365.6,1461.7 2367.0,1492.5 2369.8,1475.4 2372.5,1475.4 2374.4,1417.6 2378.0,1419.8 2380.8,1416.2 2383.5,1422.5 2387.7,1423.1 2389.1,1436.3 2394.6,1437.4 2398.1,1445.7 2401.5,1434.7 2403.7,1448.4 2410.1,1396.8 2413.0,1411.8 2415.8,1400.3 2424.5,1401.1 2427.4,1404.0 2433.1,1404.0 2435.2,1412.6 2440.3,1413.2 2442.6,1424.2 2447.5,1424.7 2450.4,1434.0 2456.2,1434.0 2459.1,1423.3 2463.4,1425.3 2464.8,1527.9 2466.8,1498.2 2472.0,1437.7 2475.5,1431.1 2478.4,1431.1 2480.1,1421.3 2481.3,1483.8 2483.6,1440.6 2485.9,1512.6 2489.3,1489.6 2492.8,1515.5 2498.0,1455.0 2500.3,1514.1 2502.3,1522.7 2503.7,1568.8 2507.2,1599.1 2510.1,1601.9 2511.8,1623.0 2514.7,1552.1 2516.7,1561.6 2518.1,1553.0 2521.0,1554.4 2524.5,1542.9 2526.8,1587.5 2529.7,1587.5 2532.0,1608.6 2535.4,1603.4 2537.7,1576.0 2539.7,1593.3 2541.8,1419.0 2543.5,1704.2 2545.5,1698.5 2546.9,1640.8 2549.8,1668.2 2555.6,1665.3 2561.4,1662.5 2564.2,1656.7 2567.1,1614.9 2570.6,1612.0 2572.3,1625.0 2574.3,1612.0 2583.0,1611.5 2585.8,1623.6 2590.2,1625.0 2592.5,1638.0 2598.8,1638.0 2600.8,1650.9 2604.6,1635.1 2607.5,1648.1 2612.6,1648.1 2615.5,1661.6 2627.6,1661.6 2630.5,1668.2 2636.3,1667.4 2639.2,1665.3 2641.5,1648.1 2644.9,1650.9 2649.2,1649.5 2652.1,1620.7 2656.4,1599.1 2662.2,1604.8 2664.5,1612.0 2668.0,1601.9 2670.8,1585.5 2675.2,1576.9 2678.1,1584.7 2682.4,1582.6 2683.8,1579.8 2685.8,1544.3 2688.1,1633.6 2691.6,1614.9 2693.9,1603.4 2696.8,1601.9 2701.1,1528.5 2703.1,1617.8 2705.4,1573.1 2709.7,1565.9 2711.2,1550.9 2716.9,1550.9 2719.8,1545.8 2722.1,1555.8 2724.2,1535.7 2733.7,1534.8 2735.7,1580.3 2737.1,1581.8" fill="none" stroke="#5794f2" stroke-width="2.2" stroke-linejoin="round"/>
<polyline points="125.3,876.1 129.0,876.1 130.4,818.7 136.0,818.7 138.1,827.8 143.0,827.8 144.8,818.7 152.0,818.7 154.1,811.1 158.3,811.1 160.4,818.7 164.8,818.7 166.9,827.8 168.7,818.7 172.6,818.7 174.3,827.8 179.9,828.5 181.9,835.7 186.8,836.1 189.2,843.8 193.8,843.8 197.7,818.7 202.1,818.7 204.2,826.8 209.1,827.1 212.6,829.2 214.6,819.8 216.7,819.8 218.5,829.2 223.0,829.2 224.1,820.1 226.1,829.2 231.4,829.2 234.8,841.7 236.9,786.7 246.0,786.7 247.8,797.8 252.9,797.8 255.0,809.0 287.7,809.0 289.8,797.8 305.1,797.8 306.5,809.0 319.0,809.0 321.1,818.7 348.3,818.7 349.9,809.0 360.8,809.0 362.9,797.8 385.2,797.8 387.0,817.3 390.7,817.3 392.5,809.0 393.9,818.7 423.4,818.7 425.5,809.0 427.6,853.5 429.0,858.0 436.7,858.0 438.7,850.0 440.0,850.0 440.0,850.0 450.9,850.0 453.0,841.3 458.5,841.3 459.9,857.0 462.0,857.0 464.1,850.5 472.5,850.5 474.5,858.0 487.8,858.0 489.9,866.7 495.4,866.7 496.8,865.1 510.0,865.1 512.1,817.3 514.6,817.3 517.0,807.3 531.6,807.3 533.7,809.0 558.8,809.0 560.8,899.4 562.9,826.4 567.1,826.4 569.9,813.1 572.0,834.7 574.8,836.1 576.8,843.1 584.5,843.1 587.3,852.1 590.1,850.7 592.2,831.0 601.9,831.0 604.7,814.3 607.5,818.0 612.3,818.7 614.0,839.6 615.8,833.3 617.9,849.1 620.0,829.9 627.7,828.2 629.7,826.8 632.5,828.2 634.6,842.4 636.7,828.2 641.6,828.2 643.7,859.8 648.5,860.2 651.3,873.7 655.5,868.8 663.8,868.5 665.9,873.7 670.8,874.1 673.6,886.9 675.3,886.2 677.1,782.2 693.1,782.2 695.2,793.0 700.7,793.0 702.1,782.2 715.3,782.2 717.4,791.6 731.3,791.6 733.4,837.5 736.9,824.3 739.0,831.0 746.0,831.0 746.3,831.0 748.1,818.0 749.7,814.3 752.5,813.1 753.9,805.5 756.0,804.1 757.4,797.8 759.5,798.5 763.0,827.8 765.1,827.1 766.7,815.9 768.5,825.0 772.7,825.0 774.1,821.8 776.2,836.8 778.3,832.4 783.1,832.4 786.6,832.9 788.7,815.7 796.4,815.7 798.2,826.0 802.6,826.0 805.4,842.7 809.6,842.1 811.3,823.6 813.8,823.6 815.9,820.8 819.6,827.1 823.2,828.2 825.6,838.9 832.6,838.9 834.0,809.7 836.0,834.7 840.2,834.7 842.3,826.8 854.8,826.8 856.2,841.0 861.8,841.0 864.6,876.1 877.1,876.1 879.2,877.2 881.7,877.2 883.4,869.9 891.0,869.9 893.1,876.9 895.2,869.9 907.0,869.9 909.8,862.6 912.6,862.6 915.1,876.9 918.9,858.0 924.4,858.0 925.8,850.0 928.6,850.0 930.0,843.8 932.8,842.4 934.2,834.7 939.7,834.7 941.8,842.7 946.0,842.1 953.0,842.1 955.1,850.7 957.1,852.1 960.6,859.8 962.7,852.1 965.5,850.7 968.3,857.7 971.1,851.4 973.8,856.3 975.9,862.1 978.7,863.0 982.2,884.8 987.8,857.4 994.7,857.4 996.1,870.5 998.2,864.6 1001.7,863.5 1003.8,856.3 1009.3,857.0 1016.3,857.0 1018.4,868.1 1022.6,868.1 1025.3,874.7 1029.5,870.9 1032.3,877.9 1037.2,877.9 1038.6,870.9 1041.3,877.9 1043.4,871.3 1060.0,871.3 1060.0,870.9 1061.8,874.7 1066.7,874.7 1068.8,881.4 1074.4,881.4 1076.2,889.0 1084.1,889.0 1085.9,881.4 1089.0,881.4 1091.8,848.6 1093.1,846.8 1095.7,847.9 1098.0,827.8 1100.1,827.3 1102.6,824.6 1105.4,826.0 1107.3,826.4 1109.2,816.6 1111.2,818.4 1113.3,826.8 1115.4,818.0 1118.9,817.6 1121.0,806.9 1123.8,799.9 1125.9,807.6 1130.5,847.9 1134.2,849.6 1137.0,859.8 1141.2,860.2 1142.6,868.1 1147.4,867.4 1155.1,868.1 1157.2,882.0 1161.4,881.6 1162.7,874.4 1164.1,878.6 1166.2,905.0 1168.0,821.5 1170.4,820.1 1173.2,807.6 1176.9,808.3 1179.4,822.2 1187.8,822.2 1189.9,806.9 1194.1,806.9 1195.9,814.5 1197.5,809.0 1207.0,809.0 1208.7,818.0 1214.2,818.0 1215.9,828.2 1220.5,828.2 1224.0,837.5 1226.8,827.8 1228.9,828.5 1230.9,834.3 1235.8,834.7 1238.2,845.2 1261.6,845.2 1263.0,834.7 1272.7,834.7 1274.4,826.4 1276.2,825.7 1278.3,818.0 1280.4,818.7 1282.4,823.6 1290.8,823.6 1292.9,814.8 1305.4,814.8 1306.8,797.8 1308.9,817.0 1311.7,811.8 1313.1,807.3 1317.9,807.3 1321.4,783.2 1324.2,831.9 1326.3,824.3 1329.1,824.3 1331.2,820.1 1333.3,849.1 1340.2,849.1 1343.7,842.7 1352.7,842.7 1355.5,868.1" fill="none" stroke="#73bf69" stroke-width="2.2" stroke-linejoin="round"/>
<polyline points="125.3,1100.9 129.0,1099.9 130.0,1108.7 140.9,1109.6 150.6,1108.7 156.2,1107.3 161.8,1106.8 165.9,1108.9 168.7,1091.5 170.8,1108.7 175.7,1109.2 182.6,1111.0 189.6,1111.7 193.8,1110.0 197.9,1107.5 202.1,1109.6 210.5,1109.6 217.4,1108.2 228.6,1110.0 232.7,1110.3 234.8,1102.0 236.9,1108.9 242.5,1107.5 248.1,1109.6 253.6,1110.6 270.3,1110.3 287.0,1110.3 292.6,1108.7 307.9,1110.0 314.2,1110.0 317.7,1112.0 337.1,1111.7 342.7,1111.7 344.8,1090.1 346.9,1112.4 351.1,1110.6 356.6,1112.0 365.0,1110.6 384.5,1110.0 387.2,1112.8 392.8,1111.0 398.4,1112.0 409.5,1111.0 419.3,1112.8 423.4,1111.7 425.5,1106.2 427.6,1112.8 440.0,1112.4 450.9,1112.0 455.1,1110.6 474.5,1111.7 482.9,1112.0 492.6,1113.8 495.4,1113.1 496.8,1106.8 498.9,1113.1 510.7,1113.1 513.5,1109.6 519.1,1110.6 521.2,1090.1 523.5,1111.4 541.4,1111.7 544.1,1111.4 545.3,1070.0 547.6,1111.7 552.5,1110.3 554.6,1108.9 558.8,1111.7 560.8,1030.3 563.6,1111.7 567.1,1060.2 569.2,1109.6 572.0,1070.0 574.8,1109.6 576.2,1102.7 578.9,1107.5 581.0,1095.0 583.8,1109.6 586.6,1081.8 588.7,1090.8 590.8,1014.3 592.9,1102.7 598.4,1101.3 601.9,976.7 604.0,1102.0 607.5,1101.3 609.6,1083.2 610.9,1088.1 613.0,1100.6 614.0,985.8 616.5,1070.0 618.6,1061.6 623.5,1081.8 624.9,985.1 627.0,1079.7 629.7,1083.2 631.1,1043.5 633.2,985.8 635.3,1082.5 637.4,1071.4 638.8,1083.2 642.3,1081.1 645.1,1103.4 647.1,1042.8 649.2,1046.3 652.7,1103.4 656.2,1104.8 658.3,1074.8 660.4,1104.8 666.6,1104.8 675.0,1106.2 678.5,1097.8 683.3,1100.9 694.5,1100.9 697.0,1081.1 700.0,1102.7 704.2,1101.3 726.5,1102.0 730.4,1075.5 733.2,1105.5 736.2,1101.3 739.7,1104.8 744.6,1103.4 746.0,1042.1 748.4,1100.6 751.8,1007.3 755.3,1099.9 758.8,1098.5 760.9,1012.9 763.0,1104.8 765.1,973.9 767.1,1104.1 767.8,994.1 770.6,1078.3 773.4,1089.4 776.2,1103.4 777.6,1089.4 779.7,1100.6 783.1,1085.3 786.6,1099.2 790.1,1096.4 798.5,1099.2 799.9,1081.8 801.9,1099.9 806.1,1102.0 808.9,1024.7 811.7,1099.9 815.9,983.0 817.9,1098.5 821.4,1057.4 823.5,1102.7 824.9,985.1 827.0,1103.4 831.9,1104.8 836.0,1079.0 838.8,1082.5 842.3,1067.9 844.4,1082.5 854.1,1082.5 861.8,1083.2 864.6,1107.5 873.6,1106.8 886.2,1106.2 903.5,1106.2 905.6,1007.3 908.4,1105.5 915.4,1106.2 918.2,1102.7 923.7,1102.7 926.5,1090.8 929.3,1093.6 932.8,1036.6 935.6,1102.0 940.4,1099.9 943.2,1044.9 946.0,1101.3 948.8,1099.9 952.3,1044.9 958.5,1102.7 961.3,996.9 964.8,1100.6 967.6,1015.7 969.7,1085.3 971.8,1017.8 975.2,1104.8 980.8,1106.2 983.6,1092.2 987.1,1056.0 990.5,1100.6 997.5,1102.7 1000.3,1101.3 1002.8,1028.2 1005.9,1101.3 1014.9,1100.6 1018.4,1104.8 1028.1,1104.8 1032.3,1102.0 1060.0,1102.7 1062.5,1106.2 1077.8,1107.5 1079.9,1106.8 1082.0,1051.9 1084.8,1106.8 1089.7,1106.2 1091.8,1104.1 1094.5,1103.4 1097.0,986.4 1099.4,1102.7 1101.8,1042.1 1104.0,1097.1 1105.7,1010.8 1107.8,1098.5 1111.0,980.9 1113.3,1098.5 1118.2,1099.2 1122.4,1095.0 1125.9,969.7 1130.0,1088.1 1133.5,1104.1 1139.1,1068.6 1141.9,1103.4 1146.0,1104.1 1148.1,1078.3 1150.2,1104.1 1156.5,1104.8 1159.3,1077.6 1161.4,1105.5 1165.5,1097.1 1168.3,1102.0 1171.8,1092.9 1174.6,1100.6 1183.6,1102.0 1187.8,1102.0 1191.3,1095.7 1193.4,1097.1 1195.9,1079.7 1198.2,1097.1 1203.1,1099.2 1210.1,1098.5 1224.0,1101.3 1242.1,1102.0 1258.8,1102.0 1264.4,1098.5 1272.7,1099.9 1279.7,1097.8 1281.8,1083.2 1284.5,1104.8 1297.8,1105.5 1301.9,1102.0 1304.0,1012.9 1306.8,1103.4 1314.5,1103.4 1315.2,1095.0 1317.2,1104.1 1322.1,1068.6 1324.2,1010.8 1326.3,1103.4 1328.4,1093.6 1329.1,995.5 1332.6,1103.4 1339.5,1102.0 1342.0,1090.8 1344.4,1099.9 1352.0,1101.3 1355.5,1104.8" fill="none" stroke="#fade2a" stroke-width="2.2" stroke-linejoin="round"/>
<polyline points="1505.3,1044.2 1509.0,1044.2 1510.4,1010.8 1516.0,1010.8 1518.1,1015.7 1523.0,1015.7 1525.1,1011.2 1532.0,1011.2 1534.1,1007.3 1538.3,1007.3 1540.4,1010.8 1544.8,1010.8 1546.9,1015.7 1548.7,1010.8 1552.6,1010.8 1554.3,1015.7 1559.9,1015.7 1561.9,1029.6 1566.8,1030.3 1569.2,1035.2 1573.8,1035.2 1577.3,1021.0 1582.1,1021.0 1584.2,1025.7 1592.6,1025.7 1594.6,1021.9 1596.7,1021.9 1598.5,1026.1 1603.0,1026.1 1604.1,1021.9 1606.1,1026.1 1611.4,1026.5 1614.8,1031.0 1616.9,1004.5 1626.0,1004.5 1627.8,1010.8 1632.9,1010.8 1635.0,1016.8 1667.7,1016.8 1669.8,1010.8 1685.1,1010.8 1686.5,1016.8 1699.0,1016.8 1701.1,1022.9 1728.3,1022.9 1729.9,1016.8 1740.8,1016.8 1742.9,1010.8 1765.2,1010.8 1767.0,1021.9 1770.7,1021.9 1772.5,1016.8 1773.9,1022.9 1803.4,1022.9 1805.5,1017.3 1807.6,1037.9 1809.0,1040.0 1816.7,1040.0 1818.7,1035.9 1820.0,1036.6 1830.9,1036.3 1833.0,1031.3 1838.5,1031.3 1840.6,1040.0 1844.1,1035.9 1852.5,1035.9 1854.5,1040.0 1867.8,1040.0 1869.9,1044.9 1875.4,1044.6 1876.8,1043.8 1889.3,1043.8 1892.1,1023.3 1895.2,1022.6 1897.7,1016.8 1921.4,1016.8 1932.5,1016.8 1938.8,1017.3 1940.8,1060.9 1942.9,1025.4 1947.8,1024.7 1949.9,1018.5 1954.8,1021.2 1964.5,1021.9 1968.0,1026.1 1972.2,1017.1 1981.2,1016.8 1984.7,1008.7 1987.5,1012.2 1992.3,1012.6 1994.0,1026.1 1997.2,1023.3 1999.3,1013.6 2010.4,1012.9 2014.6,1019.9 2016.7,1012.9 2022.3,1012.9 2024.4,1022.6 2029.2,1023.3 2032.0,1030.3 2035.5,1027.1 2043.8,1027.1 2046.6,1030.3 2051.5,1030.3 2053.9,1035.9 2055.7,1004.5 2056.4,975.6 2073.1,975.6 2075.2,982.0 2080.7,982.0 2082.1,975.6 2095.3,975.6 2097.4,995.9 2111.3,995.9 2114.1,1019.9 2116.9,1024.7 2126.0,1026.1 2128.7,1019.2 2130.0,1018.5 2133.9,1015.7 2138.1,1010.8 2140.9,1011.5 2143.0,1022.6 2145.1,1021.2 2146.7,1017.1 2148.5,1021.9 2153.4,1021.9 2156.2,1029.6 2158.3,1027.9 2165.9,1027.9 2168.7,1018.7 2176.4,1018.7 2178.5,1022.9 2182.6,1023.3 2185.4,1031.7 2189.6,1031.0 2191.0,1022.6 2193.8,1022.4 2195.9,1019.2 2200.0,1023.3 2203.2,1023.7 2205.6,1028.5 2213.0,1028.5 2214.4,1006.6 2216.3,1023.3 2220.2,1023.3 2222.3,1019.9 2234.8,1019.9 2236.6,1026.8 2241.8,1026.8 2244.6,1037.9 2261.3,1037.9 2263.4,1033.8 2271.0,1033.8 2273.1,1037.9 2275.2,1033.8 2288.4,1033.8 2290.5,1030.7 2292.6,1031.0 2295.1,1037.7 2298.9,1027.5 2304.4,1027.1 2306.5,1024.0 2309.3,1022.6 2313.5,1008.0 2319.0,1008.0 2321.8,1011.2 2324.6,1011.8 2326.0,1019.6 2333.0,1019.9 2335.1,1023.3 2339.9,1027.5 2344.1,1024.0 2346.2,1033.8 2349.0,1035.9 2351.8,1032.4 2354.5,1037.3 2358.7,1039.3 2362.2,1050.5 2367.8,1036.8 2374.7,1036.8 2376.1,1043.5 2378.2,1040.7 2383.1,1036.6 2395.6,1036.6 2398.4,1042.1 2402.6,1042.4 2405.3,1046.3 2408.8,1043.8 2411.6,1047.7 2417.2,1047.7 2418.6,1044.2 2421.3,1047.7 2423.4,1043.8 2440.0,1043.8 2442.5,1045.6 2446.7,1046.0 2449.5,1048.4 2455.1,1049.1 2457.1,1052.6 2464.1,1052.6 2466.2,1049.1 2469.7,1048.4 2472.5,1034.5 2475.9,1033.1 2478.7,1024.7 2482.9,1019.9 2487.1,1018.2 2489.9,1013.6 2492.6,1018.5 2495.4,1014.3 2498.9,1013.6 2502.4,1005.9 2504.5,1005.2 2509.3,1031.0 2514.2,1032.4 2517.0,1037.9 2521.2,1038.6 2522.6,1042.1 2534.4,1042.1 2537.2,1049.1 2542.0,1047.7 2543.4,1045.6 2546.2,1057.4 2548.3,1019.2 2552.5,1013.6 2556.7,1013.6 2558.8,1019.9 2567.8,1019.9 2569.9,1012.9 2587.3,1012.9 2589.4,1017.8 2594.2,1018.2 2596.3,1022.6 2601.2,1023.3 2604.0,1028.2 2608.2,1022.6 2610.3,1027.9 2615.1,1028.2 2617.9,1033.1 2641.6,1033.1 2643.0,1028.2 2652.7,1027.9 2656.2,1022.4 2659.7,1007.3 2662.4,1021.0 2670.8,1021.0 2672.9,1004.5 2676.4,1004.5 2677.8,1014.3 2684.7,1015.0 2686.1,1016.4 2687.2,1008.0 2688.9,1031.0 2691.7,1027.5 2695.2,1026.8 2697.9,1026.5 2701.4,1009.4 2704.2,1035.2 2707.0,1032.4 2709.8,1023.3 2716.7,1024.0 2723.7,1021.9 2732.0,1021.9 2734.1,1031.7 2735.5,1033.8" fill="none" stroke="#73bf69" stroke-width="2.2" stroke-linejoin="round"/>
<polyline points="1505.3,1008.7 1508.4,1008.0 1509.7,1015.7 1518.1,1015.7 1527.8,1012.9 1536.2,1010.8 1545.9,1011.5 1552.9,1011.2 1555.0,1013.2 1559.9,1012.2 1561.9,1017.1 1572.4,1017.8 1577.9,1013.6 1594.6,1013.2 1603.0,1012.9 1613.4,1015.0 1614.8,1016.0 1616.9,992.7 1633.6,992.0 1635.7,994.1 1654.5,994.1 1661.5,993.4 1669.8,992.0 1685.1,991.7 1700.4,993.8 1728.3,993.8 1731.1,992.7 1742.2,992.7 1744.3,990.6 1764.5,990.9 1768.6,994.1 1773.5,993.1 1790.9,994.8 1803.4,993.8 1805.5,991.7 1807.6,1017.8 1811.8,1016.4 1816.0,1016.4 1818.7,1013.6 1820.0,1015.7 1830.9,1013.6 1837.8,1012.6 1844.8,1012.9 1855.9,1013.2 1869.9,1014.6 1887.9,1014.6 1890.0,1014.3 1892.1,1006.6 1897.7,1004.8 1902.6,1008.7 1922.7,1008.7 1924.8,1020.1 1931.1,1021.0 1933.9,1016.4 1938.1,1016.4 1939.2,1008.0 1940.8,1047.7 1942.9,1012.9 1949.2,1008.7 1952.0,1021.0 1957.5,1016.8 1961.0,1018.5 1964.5,1013.6 1970.1,1008.0 1979.8,1004.5 1982.6,996.9 1984.7,1006.6 1988.2,992.0 1992.3,995.5 1995.1,1001.1 2000.0,987.8 2004.9,986.4 2014.6,980.9 2021.6,973.9 2023.7,999.0 2028.5,996.2 2031.3,1003.8 2038.3,1001.5 2053.6,1004.3 2056.4,978.1 2074.5,977.8 2093.9,975.6 2106.5,976.0 2111.3,972.2 2114.1,1000.4 2119.0,1003.8 2127.4,1004.3 2130.0,1004.3 2131.8,995.5 2133.9,993.4 2136.7,989.2 2140.2,989.9 2142.5,1009.4 2145.1,1007.3 2147.8,991.3 2149.9,999.0 2152.7,1000.4 2156.2,995.5 2159.0,990.6 2161.8,989.2 2164.5,983.7 2169.4,978.8 2175.7,978.1 2178.5,983.7 2184.0,980.9 2188.2,980.6 2191.3,984.8 2195.9,973.2 2198.6,992.0 2202.1,989.2 2204.9,995.5 2210.5,995.5 2214.0,1000.4 2217.4,997.3 2220.9,995.5 2222.3,989.2 2227.2,987.6 2232.7,983.0 2236.9,982.3 2242.2,979.5 2243.9,1005.9 2256.4,1005.9 2264.8,1004.3 2273.1,1004.8 2283.5,1004.3 2286.3,1000.4 2291.2,999.7 2295.4,1001.1 2297.5,994.1 2300.9,996.9 2305.1,996.2 2307.9,992.0 2312.1,992.7 2314.9,989.2 2319.0,987.8 2321.8,992.0 2323.9,987.1 2327.4,991.3 2331.6,987.8 2333.7,997.6 2337.1,994.8 2340.6,985.1 2342.7,995.5 2346.9,989.2 2351.1,991.3 2355.2,992.0 2356.6,996.9 2362.2,997.6 2365.0,989.9 2369.2,987.8 2374.7,989.2 2376.8,997.3 2381.7,993.4 2387.2,988.5 2392.8,986.4 2397.0,989.9 2402.6,989.9 2406.0,993.4 2409.5,989.5 2416.5,988.5 2420.7,990.3 2424.8,987.8 2433.2,986.2 2440.0,986.4 2441.8,992.7 2448.1,994.1 2454.4,995.5 2456.4,998.7 2462.0,996.9 2467.6,994.1 2470.4,1011.8 2472.5,1010.1 2475.2,1011.8 2476.6,997.3 2478.0,1008.7 2480.1,1007.3 2483.6,998.7 2485.7,995.9 2487.8,998.3 2490.5,992.7 2494.0,998.3 2498.2,997.3 2502.4,991.3 2505.9,985.8 2511.4,1015.0 2514.2,1010.1 2517.0,1015.7 2526.0,1014.6 2528.1,1009.0 2530.2,1013.2 2537.2,1013.6 2539.3,1003.8 2541.4,1015.0 2544.1,1015.0 2546.2,1032.4 2548.3,1008.7 2552.5,1011.2 2558.1,1010.8 2563.6,1009.0 2567.8,1007.3 2570.6,999.7 2575.5,998.7 2578.2,989.2 2591.5,989.0 2594.2,988.1 2600.5,987.1 2602.6,992.7 2606.8,990.6 2610.3,994.8 2616.5,994.5 2619.3,994.1 2624.9,993.4 2630.4,993.4 2633.2,999.0 2637.4,999.0 2641.6,994.8 2647.1,992.0 2652.7,991.3 2655.5,987.8 2659.7,983.0 2662.4,995.5 2666.6,996.9 2670.8,998.3 2672.9,993.4 2680.5,993.1 2686.1,996.2 2688.2,1015.7 2693.1,1017.8 2698.6,1015.7 2701.4,1004.5 2704.9,1024.0 2708.4,1023.3 2711.2,1010.1 2715.3,1015.7 2720.9,1017.1 2725.1,1005.9 2730.7,1004.3 2733.4,1005.2 2735.5,1012.2" fill="none" stroke="#fade2a" stroke-width="2.2" stroke-linejoin="round"/>
</svg></body></html>
